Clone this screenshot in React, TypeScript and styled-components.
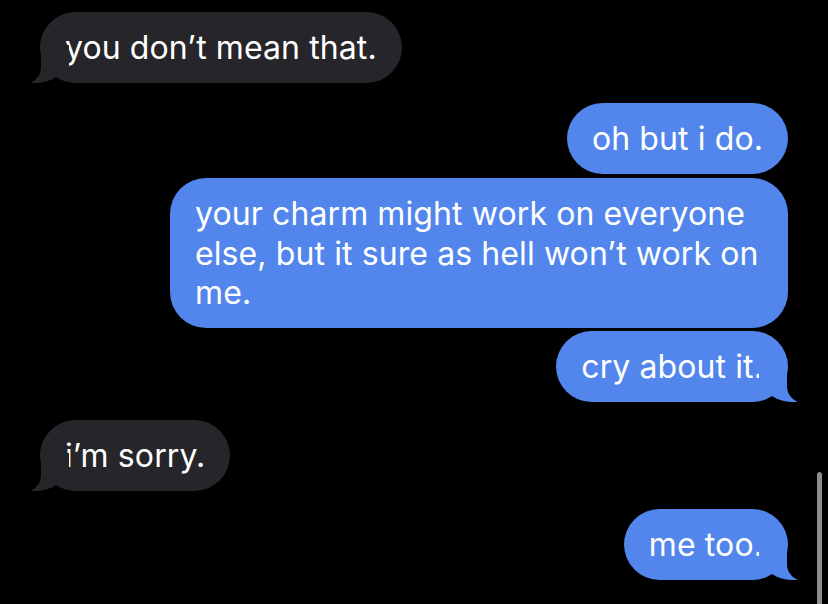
import React from "react";
import styled, { createGlobalStyle } from "styled-components";

const GlobalStyle = createGlobalStyle`
  html, body {
    margin: 0;
    padding: 0;
    background: #000;
  }
  body {
    font-family: Inter, "Liberation Sans", sans-serif;
    -webkit-font-smoothing: antialiased;
  }
`;

const Screen = styled.div`
  position: relative;
  width: 828px;
  height: 604px;
  overflow: hidden;
  background: #000;
`;

const Thread = styled.div`
  display: flex;
  flex-direction: column;
  padding: 12px 40px 0 40px;
`;

type Side = "in" | "out";

const Bubble = styled.div<{ $side: Side; $gap: number; $maxWidth?: number }>`
  position: relative;
  align-self: ${(p) => (p.$side === "out" ? "flex-end" : "flex-start")};
  margin-top: ${(p) => p.$gap}px;
  max-width: ${(p) => (p.$maxWidth ? `${p.$maxWidth}px` : "none")};
  box-sizing: border-box;
  padding: 16px 25px 15.5px 25px;
  border-radius: 36px;
  background: ${(p) => (p.$side === "out" ? "#5286ec" : "#262529")};
  color: #fff;
  font-size: 32px;
  line-height: 39.5px;
  letter-spacing: 0.1px;
`;

const Tail = styled.svg<{ $side: Side }>`
  position: absolute;
  bottom: 0;
  width: 40px;
  height: 40px;
  ${(p) => (p.$side === "out" ? "right: -11px;" : "left: -11px; transform: scaleX(-1);")}
`;

const Scroll = styled.div`
  position: absolute;
  left: 817px;
  top: 472px;
  width: 5px;
  height: 150px;
  border-radius: 3px;
  background: #8c8c8c;
`;

type Msg = { side: Side; text: string; gap: number; tail: boolean; maxWidth?: number };

const messages: Msg[] = [
  { side: "in", text: "you don\u2019t mean that.", gap: 0, tail: true },
  { side: "out", text: "oh but i do.", gap: 20, tail: false },
  {
    side: "out",
    text: "your charm might work on everyone else, but it sure as hell won\u2019t work on me.",
    gap: 4,
    tail: false,
    maxWidth: 618,
  },
  { side: "out", text: "cry about it.", gap: 3, tail: true },
  { side: "in", text: "i\u2019m sorry.", gap: 18, tail: true },
  { side: "out", text: "me too.", gap: 18, tail: true },
];

function TailShape({ side, color }: { side: Side; color: string }) {
  return (
    <Tail $side={side} viewBox="0 0 40 40">
      <path
        d="M28 2 L28 24 C28 32 33 37.5 39 40 C31 40.6 20 39 13 34 L0 30 L0 2 Z"
        fill={color}
      />
    </Tail>
  );
}

export default function App() {
  return (
    <>
      <GlobalStyle />
      <Screen>
        <Thread>
          {messages.map((m, i) => (
            <Bubble key={i} $side={m.side} $gap={m.gap} $maxWidth={m.maxWidth}>
              {m.text}
              {m.tail && (
                <TailShape side={m.side} color={m.side === "out" ? "#5286ec" : "#262529"} />
              )}
            </Bubble>
          ))}
        </Thread>
        <Scroll />
      </Screen>
    </>
  );
}
